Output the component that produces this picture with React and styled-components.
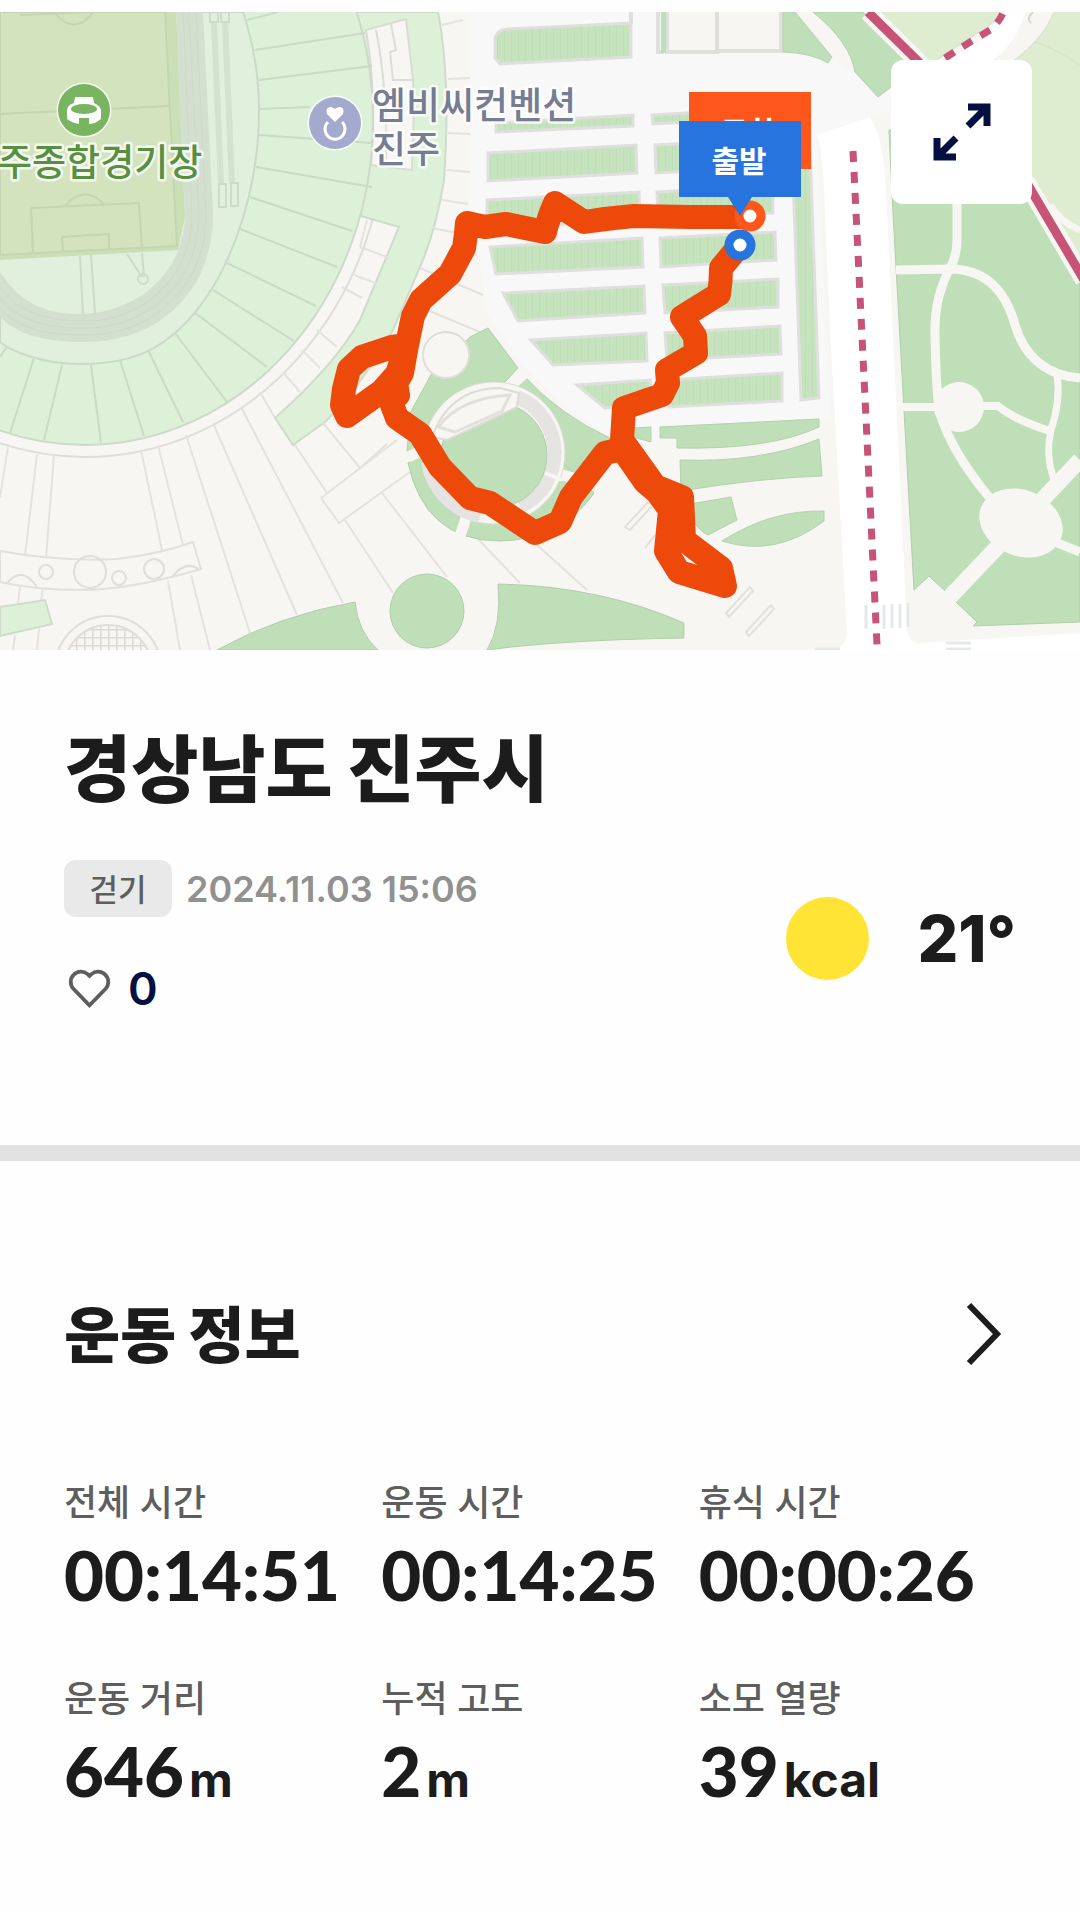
import React from 'react';
import styled, { createGlobalStyle } from 'styled-components';

const GlobalStyle = createGlobalStyle`
  * {
    box-sizing: border-box;
  }
  body {
    margin: 0;
    background: #fefefe;
    color: #1c1c1c;
    font-family: Inter, "Noto Sans CJK KR", sans-serif;
  }
  h1, h2, p, dl, dt, dd {
    margin: 0;
  }
`;

const Page = styled.main`
  padding-top: 12px;
`;

const MapWrapper = styled.section`
  position: relative;
`;

const MapSvg = styled.svg`
  display: block;
  width: 100%;
  height: auto;
  font-family: "Noto Sans CJK KR", sans-serif;
`;

const ExpandButton = styled.button`
  position: absolute;
  top: 48px;
  right: 48px;
  display: flex;
  align-items: center;
  justify-content: center;
  width: 141px;
  height: 144px;
  padding: 0;
  border: 0;
  border-radius: 12px;
  background: #fff;
  cursor: pointer;
`;

const Summary = styled.section`
  display: flex;
  flex-direction: column;
  padding: 72px 64px 128px;
`;

const Title = styled.h1`
  font-size: 73px;
  line-height: 96px;
  font-weight: 900;
`;

const SummaryRow = styled.div`
  display: flex;
  justify-content: space-between;
  align-items: center;
  margin-top: 42px;
`;

const Meta = styled.div`
  display: flex;
  align-items: center;
  gap: 14px;
`;

const Badge = styled.span`
  display: flex;
  align-items: center;
  justify-content: center;
  width: 108px;
  height: 57px;
  padding-bottom: 2px;
  border-radius: 12px;
  background: #e9e9e9;
  color: #5e5e5e;
  font-size: 31px;
  font-weight: 500;
`;

const DateText = styled.time`
  color: #919191;
  font-size: 36px;
  font-weight: 600;
`;

const LikeButton = styled.button`
  display: flex;
  align-items: center;
  gap: 16px;
  margin-top: 44px;
  padding: 0 3px;
  border: 0;
  background: none;
  color: #040f42;
  font: inherit;
  font-size: 45px;
  line-height: 56px;
  font-weight: 600;
  cursor: pointer;
`;

const Weather = styled.div`
  display: flex;
  align-items: center;
  gap: 48px;
  font-size: 64px;
  font-weight: 800;
`;

const Sun = styled.span`
  width: 83px;
  height: 83px;
  border-radius: 50%;
  background: #ffe335;
`;

const Divider = styled.hr`
  height: 16px;
  margin: 0;
  border: 0;
  background: #e2e2e2;
`;

const Info = styled.section`
  padding: 126px 64px 96px;
`;

const InfoHeader = styled.a`
  display: flex;
  justify-content: space-between;
  align-items: center;
  padding-right: 14px;
  color: inherit;
  text-decoration: none;
`;

const InfoTitle = styled.h2`
  padding-top: 4px;
  font-size: 61px;
  line-height: 90px;
  font-weight: 900;
`;

const Stats = styled.dl`
  display: grid;
  grid-template-columns: repeat(3, 1fr);
  row-gap: 52px;
  margin-top: 96px;
`;

const StatLabel = styled.dt`
  color: #5e5e5e;
  font-size: 36px;
  line-height: 52px;
  font-weight: 500;
`;

const StatValue = styled.dd`
  font-family: Lato, sans-serif;
  font-size: 69px;
  line-height: 92px;
  font-weight: 900;
  white-space: nowrap;
`;

const Unit = styled.span`
  margin-left: 5px;
  font-family: Inter, sans-serif;
  font-size: 48px;
  font-weight: 700;
`;

const stats = [
  { label: '전체 시간', value: '00:14:51' },
  { label: '운동 시간', value: '00:14:25' },
  { label: '휴식 시간', value: '00:00:26' },
  { label: '운동 거리', value: '646', unit: 'm' },
  { label: '누적 고도', value: '2', unit: 'm' },
  { label: '소모 열량', value: '39', unit: 'kcal' },
];

// parking bays, left and right column
const bays = [
  'M495 38Q497 30 507 29L631 23V57L500 64L495 58Z',
  'M496 123L633 115V126L496 132Z',
  'M488 153L636 145L637 173L488 181Z',
  'M487 200L639 192L640 220L487 228Z',
  'M490 247L642 238L643 267L496 274Z',
  'M503 293L644 286L645 313L518 321Z',
  'M531 340L646 333L647 361L553 365Z',
  'M577 385L650 380L651 405L605 408Z',
  'M652 115L771 108V118L653 124Z',
  'M655 145L772 139V167L656 173Z',
  'M657 192L773 185V213L658 219Z',
  'M660 238L775 232L776 260L661 267Z',
  'M663 285L778 279V307L665 313Z',
  'M665 333L780 326L781 354L667 360Z',
  'M668 380L782 373V401L670 407Z',
  'M792 150H810L819 398L801 400Z',
];

const standLines =
  'M247 20L278 12M255 50L365 33M259 80L372 66M259 109L310 107M259 135L372 143M256 167L372 187' +
  'M250 197L352 231M240 229L337 267M227 263L316 306M213 290L294 341M195 313L267 367M175 333L227 402' +
  'M148 350L183 422M120 360L144 436M91 365L101 443M62 365L44 440M34 358L10 433M8 345L0 357';

const plazaLines =
  'M8 447L0 497M37 454L25 556M54 455L46 558M141 450L162 550M158 445L183 545M186 435L250 633' +
  'M213 423L297 615M241 407L343 603M295 445L327 493M323 423L360 468L387 444M321 498L397 440M321 498L339 523L410 472' +
  'M345 520L393 593M382 493L447 577M477 538L520 583M537 545L587 590' +
  'M317 330L337 347M302 350L320 368M283 372L300 392M260 392L275 418M352 273L362 279M342 287L362 298' +
  'M367 220L360 247M360 247L387 257M360 277L377 284' +
  'M442 25L463 20M448 79L472 78M448 133L473 134M447 170L470 172M442 200L468 204M432 228L457 233M420 268L483 295M427 310L480 332' +
  'M20 586L18 603M43 588L41 601M168 581L180 650M191 575L210 650M15 635L13 650M39 629L37 650';

const route =
  'M750 217L690 217L634 216Q610 218 584 222L555 203Q549 216 545 232L506 224L485 227L467 223Q466 236 464 248L450 274L421 300L413 316' +
  'L407 345L392 347L362 357L349 369L344 389L342 405L347 416L382 391L397 374L407 345L402 373L396 383L398 395L391 402' +
  'L397 418L420 434L440 467L470 498L490 503L535 533L560 522L571 497L605 453L622 449' +
  'L645 482L657 492L670 510L666 551L679 572L725 586L721 568L684 540L682 497L655 486L622 440' +
  'L624 408L662 395L668 383L667 370L696 353L695 336L682 317L719 294Q721 282 721 268L740 245';

const StadiumArea = () => (
  <g>
    <ellipse cx="85" cy="120" rx="301" ry="337" fill="#f8f6f2" stroke="#dfddda" strokeWidth="2" />
    <path d="M352 12H438Q451 80 444 180Q436 230 420 267L393 330Q362 385 325 422L293 445L275 418Q335 365 360 320L399 227L361 216Z" fill="#ddf1d9" stroke="#cfdccb" strokeWidth="2" />
    <path d="M366 30L406 19L413 80L414 110L412 170L371 165Q377 95 366 30Z" fill="#f8f6f2" stroke="#d8dcd4" strokeWidth="2" />
    <path d="M376 30Q388 90 386 165M391 24L396 50L390 52L393 80H413" fill="none" stroke="#dcdcd9" strokeWidth="2" />
    <ellipse cx="85" cy="120" rx="288" ry="325" fill="#ddf1d9" stroke="#ced9ca" strokeWidth="2" />
    <path d={standLines} stroke="#cbd9c7" strokeWidth="2" fill="none" />
    <path d="M243 12Q259 60 259 110C259 200 225 290 175 333C145 360 110 364 80 364C40 364 10 350 0 342V12Z" fill="#e1f0dd" stroke="#ccd9c9" strokeWidth="2" />
    <path d="M203 12L213 215C213 290 160 342 85 342C45 342 18 335 0 317V12Z" fill="#d3dfcf" />
    <path d="M196 12L206 215C206 285 155 335 85 335C45 335 18 328 0 309M189 12L199 215C199 280 150 328 85 328C45 328 18 320 0 299M183 12L192 215C192 275 145 321 85 321C45 321 18 312 0 287" fill="none" stroke="#cedac9" />
    <path d="M176 12L185 217C183 275 135 314 78 314C42 314 18 300 0 272V12Z" fill="#e1f0dd" />
    <path d="M0 12H176L185 217L178 250L0 260Z" fill="#cbdfb6" />
    <path d="M0 12H165L177 246L0 255Z" fill="#d2e3bd" stroke="#c5d5b3" strokeWidth="2" />
    <path d="M20 15L92 12M55 13Q73 36 93 13M0 114L170 106M31 208L139 203L142 248M31 208L33 252M62 237L109 234V250M62 237L63 252M65 206Q84 184 104 204" fill="none" stroke="#c5d5b3" strokeWidth="2" />
    <path d="M80 256L83 316M91 255L95 314M127 254L142 277M142 253L144 277" stroke="#ccdac8" strokeWidth="2" />
    <circle cx="143" cy="279" r="5" fill="none" stroke="#ccdac8" strokeWidth="2" />
    <path d="M214 22L221 184M225 22L232 184" stroke="#d3e1cf" strokeWidth="6" />
    <path d="M210 12V22H218V12M221 12V22H229V12M219 184H226V207H219ZM231 183H238V206H231Z" fill="none" stroke="#cddbc9" strokeWidth="2" />
  </g>
);

const PlazaArea = () => (
  <g>
    <path d={plazaLines} stroke="#e4e2df" strokeWidth="2" fill="none" />
    <path d="M0 551Q60 562 117 559Q160 554 193 542L201 569Q130 590 80 590Q35 590 0 582Z" fill="#f8f6f2" stroke="#e2e0dd" strokeWidth="2" />
    <g fill="none" stroke="#e0dedb" strokeWidth="2">
      <circle cx="46" cy="572" r="7" />
      <circle cx="90" cy="572" r="16" />
      <circle cx="119" cy="578" r="7" />
      <circle cx="154" cy="569" r="10" />
      <path d="M7 583Q22 565 37 587M172 577Q185 560 199 569" />
      <circle cx="108" cy="669" r="53" />
    </g>
    <circle cx="108" cy="669" r="44" fill="url(#grid)" stroke="#dfddda" strokeWidth="2" />
    <path d="M0 607L45 600L52 624L0 636Z" fill="#ddf1d9" stroke="#cfdccb" strokeWidth="2" />
    <g fill="#bfdfb8" stroke="#b2cdac" strokeWidth="1">
      <path d="M217 650Q280 615 355 602Q358 632 378 650Z" />
      <circle cx="427" cy="611" r="37" />
      <path d="M498 584Q600 586 684 623V638Q560 640 487 650Q502 625 498 584Z" />
    </g>
  </g>
);

const ParkingArea = () => (
  <g>
    <path d="M470 12H782V52Q840 48 878 97L893 88V110L870 117L817 135L830 418L640 440L610 438L560 402L518 360L488 315L470 200Z" fill="#f8f8f8" />
    <g stroke="#dfe0de" strokeWidth="4">
      <path d="M631 12V24M658 12V52H664" fill="none" />
      <path d="M667 10H717V52H667ZM717 10H781V51H717Z" fill="#f8f6f2" />
    </g>
    <path d="M661 12H666V53H661Z" fill="#bfdfb8" />
    <g fill="url(#bay)" stroke="#dfe0de" strokeWidth="3">
      {bays.map((d) => <path key={d} d={d} />)}
    </g>
    <g fill="#bfdfb8" stroke="#b5d0af" strokeWidth="1">
      <path d="M633 428L651 427V442L633 437Z" />
      <path d="M660 427L819 419V427Q770 450 677 448V438H660Z" />
      <path d="M680 460Q760 463 819 439L822 476Q760 478 681 491Z" />
      <path d="M690 504L731 497L737 520L708 535Q697 530 690 515Z" />
      <path d="M722 541Q770 510 824 511V521Q775 558 722 541Z" />
      <path d="M783 12H795L832 57L828 63Q812 53 783 52Z" />
      <path d="M813 12H863L920 65L878 97L855 72Q850 42 813 12Z" />
    </g>
    <g fill="none" stroke="#e2e0dd" strokeWidth="2">
      <path d="M750 587L753 591L729 617L726 613ZM771 605L774 609L749 636L746 632ZM648 502L653 505L630 530L625 527ZM655 535L645 548" />
    </g>
  </g>
);

const GardenArea = () => (
  <g>
    <path d="M488 328L518 368L505 382L480 420L407 452L410 413L432 373L470 337Z" fill="#bfdfb8" stroke="#b2cdac" />
    <path d="M525 377Q560 415 610 438L598 485L540 480L515 385Z" fill="#bfdfb8" stroke="#b2cdac" />
    <path d="M408 463Q425 541 500 541Q562 540 594 493L560 460L420 455Z" fill="#bfdfb8" stroke="#b2cdac" />
    <circle cx="446" cy="355" r="23" fill="#f8f6f2" stroke="#e0deda" strokeWidth="2" />
    <path d="M408 457L430 447M459 539L467 515M555 473L606 487M505 390L526 372" stroke="#f8f6f2" strokeWidth="11" />
    <circle cx="494" cy="453" r="71" fill="#f8f6f2" stroke="#dbdad4" strokeWidth="1" />
    <path d="M517 397A60 60 0 0 1 520 507M480 516A66 66 0 0 1 428 462" fill="none" stroke="#e6e4e2" strokeWidth="14" />
    <circle cx="494" cy="455" r="53" fill="#bfdfb8" stroke="#b2cdac" />
    <path d="M432 437Q450 388 500 388L519 393L517 407L447 440Z" fill="#f8f6f2" stroke="#dddbd8" strokeWidth="2" />
    <path d="M438 427Q460 398 510 395L502 411L455 432Z" fill="none" stroke="#e2e0dd" strokeWidth="3" />
    <path d="M545 473L562 480" stroke="#f8f6f2" strokeWidth="4" />
  </g>
);

const ParkArea = () => (
  <g>
    <path d="M877 12H1080V300H1032L920 60Z" fill="#deedcf" />
    <path d="M1030 40Q1060 50 1080 66" fill="none" stroke="#d5e2c8" />
    <path d="M930 90L1000 44Q1025 26 1034 4" fill="none" stroke="#dddcd6" strokeWidth="44" />
    <path d="M930 90L1000 44Q1025 26 1034 4" fill="none" stroke="#f8f6f2" strokeWidth="42" />
    <path d="M925 92L986 50Q1008 34 1015 4" fill="none" stroke="#fff" strokeWidth="24" />
    <path d="M1033 12Q1026 18 1031 23" fill="none" stroke="#d5d3d0" strokeWidth="2" />
    <path d="M889 130H985L1032 192L1080 275V622L973 626L977 622L956 602L945 591L929 576L914 590L893 213Z" fill="#bfdfb8" stroke="#b2cdac" />
    <g fill="none" stroke="#f8f6f2" strokeWidth="9">
      <path d="M957 200V240Q957 256 950 268Q934 298 935 335Q936 385 939 410Q950 450 989 497" />
      <path d="M896 270L951 269Q1000 270 1015 325Q1030 374 1080 378" />
      <path d="M1057 374Q1061 400 1051 430Q1045 455 1054 480" strokeWidth="7" />
      <path d="M903 407H940M980 406H998Q1015 420 1050 431" strokeWidth="8" />
      <path d="M1050 540L1080 552" />
      <path d="M948 599L1080 460" strokeWidth="16" />
      <path d="M1050 205Q1060 222 1080 230" strokeWidth="7" />
    </g>
    <circle cx="959" cy="407" r="25" fill="#f8f6f2" />
    <ellipse cx="1021" cy="523" rx="43" ry="33" transform="rotate(22 1021 523)" fill="#f8f6f2" />
    <path d="M868 12L925 68L1028 185L1084 280" fill="none" stroke="#f8f6f2" strokeWidth="18" />
    <path d="M868 12L925 68L1028 185L1084 280" fill="none" stroke="#c75476" strokeWidth="9" />
    <path d="M945 58L970 42L990 30Q1000 22 1005 8" fill="none" stroke="#c75476" strokeWidth="7" strokeDasharray="11 10" />
  </g>
);

const Roads = () => (
  <g>
    <path d="M817 135L870 117Q884 140 886 190L907 628Q908 643 918 643L1080 633V650H835Q847 645 847 632L830 330L824 190Q822 150 817 135Z" fill="#fff" />
    <path d="M866 605V629M884 605V629M892 604V628M900 604V628M908 603V627M946 643H971M946 649H971M815 649H840" stroke="#e6e9eb" strokeWidth="3" />
    <path d="M853 151L877 645" stroke="#c75476" strokeWidth="7" strokeDasharray="11 10" />
  </g>
);

const PlaceLabels = () => (
  <g fontSize="37" fontWeight="500" stroke="#fff" strokeOpacity="0.8" strokeWidth="5" strokeLinejoin="round" paintOrder="stroke">
    <circle cx="84" cy="110" r="26" fill="#79b560" strokeWidth="3" />
    <path d="M75 97H93L94 103Q101 106 101 111V119Q95 124 89 124V118H79V124Q72 123 67 119V111Q67 105 74 103Z" fill="#fff" stroke="none" />
    <ellipse cx="84" cy="109" rx="13" ry="5" fill="#79b560" stroke="none" />
    <text x="-36" y="176" fill="#58903f">진주종합경기장</text>
    <circle cx="335" cy="123" r="26" fill="#a3aacd" strokeWidth="3" />
    <path d="M335 122L327 114Q325 108 330 107Q333 107 335 109Q337 107 340 107Q345 108 343 114Z" fill="#fff" stroke="none" />
    <path d="M328 122A10 10 0 1 0 342 122" fill="none" strokeOpacity="1" strokeWidth="3" />
    <text x="372" y="119" fill="#767d92">엠비씨컨벤션</text>
    <text x="372" y="163" fill="#767d92">진주</text>
  </g>
);

const RoutePins = () => (
  <g fontSize="30" fontWeight="700" textAnchor="middle">
    <circle cx="750" cy="216" r="11" fill="#fff" stroke="#ff561b" strokeWidth="9" />
    <path d="M689 92H811V169H689Z" fill="#ff561b" />
    <text x="748" y="143" fill="#fff">도착</text>
    <circle cx="740" cy="245" r="11" fill="#fff" stroke="#2874df" strokeWidth="9" />
    <path d="M679 121H801V197H752L740 216L728 197H679Z" fill="#2874df" />
    <text x="739" y="172" fill="#fff">출발</text>
  </g>
);

const RouteMap = () => (
  <MapSvg viewBox="0 12 1080 638" role="img" aria-label="운동 경로 지도">
    <defs>
      <pattern id="bay" width="7" height="14" patternUnits="userSpaceOnUse">
        <rect width="7" height="14" fill="#c5e4bd" />
        <path d="M0 0V14" stroke="#bfddb8" strokeWidth="2" />
      </pattern>
      <pattern id="grid" x="4" y="5" width="8" height="8" patternUnits="userSpaceOnUse">
        <path d="M0 0H8M0 0V8" stroke="#dcdad7" strokeWidth="3" />
      </pattern>
    </defs>
    <rect y="12" width="1080" height="638" fill="#f8f6f2" />
    <StadiumArea />
    <PlazaArea />
    <ParkingArea />
    <GardenArea />
    <ParkArea />
    <Roads />
    <PlaceLabels />
    <path d={route} fill="none" stroke="#ec490b" strokeWidth="24" strokeLinejoin="round" strokeLinecap="round" />
    <RoutePins />
  </MapSvg>
);

const ExpandIcon = () => (
  <svg width="58" height="58" viewBox="0 0 58 58" fill="none" stroke="#040f42" strokeWidth="7">
    <path d="M35 4H54V23M54 4L35 23M4 35V54H23M4 54L23 35" />
  </svg>
);

const HeartIcon = () => (
  <svg width="45" height="42" viewBox="0 0 48 45" fill="none" stroke="#5e5e5e" strokeWidth="4">
    <path d="M24 40L6.500 22A11 11 0 0 1 22 6.500L24 8.500L26 6.500A11 11 0 0 1 41.500 22Z" />
  </svg>
);

const ChevronIcon = () => (
  <svg width="36" height="64" viewBox="0 0 36 64" fill="none" stroke="#1c1c1c" strokeWidth="6">
    <path d="M3 3L31 32L3 61" />
  </svg>
);

const App = () => (
  <Page>
    <GlobalStyle />
    <MapWrapper>
      <RouteMap />
      <ExpandButton type="button" aria-label="지도 확대">
        <ExpandIcon />
      </ExpandButton>
    </MapWrapper>
    <Summary>
      <Title>경상남도 진주시</Title>
      <SummaryRow>
        <div>
          <Meta>
            <Badge>걷기</Badge>
            <DateText dateTime="2024-11-03T15:06">2024.11.03 15:06</DateText>
          </Meta>
          <LikeButton type="button" aria-label="좋아요 0">
            <HeartIcon />
            0
          </LikeButton>
        </div>
        <Weather>
          <Sun />
          21°
        </Weather>
      </SummaryRow>
    </Summary>
    <Divider />
    <Info>
      <InfoHeader href="#detail">
        <InfoTitle>운동 정보</InfoTitle>
        <ChevronIcon />
      </InfoHeader>
      <Stats>
        {stats.map((stat) => (
          <div key={stat.label}>
            <StatLabel>{stat.label}</StatLabel>
            <StatValue>
              {stat.value}
              {stat.unit && <Unit>{stat.unit}</Unit>}
            </StatValue>
          </div>
        ))}
      </Stats>
    </Info>
  </Page>
);

export default App;
